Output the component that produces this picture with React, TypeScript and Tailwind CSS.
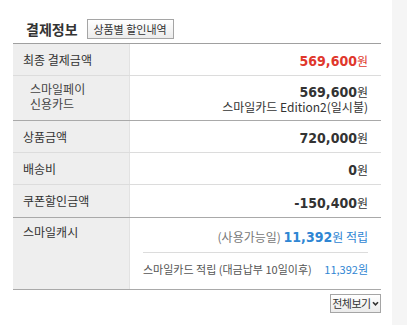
import React from "react";

const KR = "font-['Noto_Sans_CJK_KR','Noto_Sans',sans-serif]";
const NUM = "font-['DejaVu_Sans_Condensed','DejaVu_Sans','Noto_Sans_CJK_KR',sans-serif] font-bold";

function Row({
  label,
  children,
  h,
  strong,
  labelTop,
}: {
  label: React.ReactNode;
  children: React.ReactNode;
  h: string;
  strong?: boolean;
  labelTop?: boolean;
}) {
  return (
    <div className={`flex ${h} border-b ${strong ? "border-[#a9a9a9]" : "border-[#dcdcdc]"}`}>
      <div
        className={`w-[117px] shrink-0 bg-[#eeeeee] border-r border-[#e2e2e2] pl-[10px] text-[12px] text-[#333] flex ${labelTop ? "items-start" : "items-center"}`}
      >
        {label}
      </div>
      <div className="flex-1 bg-white pr-[13px] flex flex-col justify-center items-end">{children}</div>
    </div>
  );
}

export default function App() {
  return (
    <div className={`flex w-[407px] h-[330px] bg-white ${KR}`}>
      <div className="w-[392px] shrink-0 pl-[13px] pr-[11px]">
        <div className="flex items-center gap-[9px] pl-[13px] pt-[19px] pb-[4px]">
          <span className="text-[14px] font-bold text-[#333] leading-none">결제정보</span>
          <button className="h-[20px] w-[87px] border border-[#a5a5a5] bg-gradient-to-b from-white to-[#ececec] text-[11px] text-[#333] leading-none flex items-center justify-center">
            상품별 할인내역
          </button>
        </div>
        <div className="border-t border-[#a0a0a0]">
          <Row label="최종 결제금액" h="h-[32px]">
            <span className="text-[#e0372c] leading-none">
              <span className={`${NUM} text-[14px]`}>569,600</span>
              <span className="text-[12px]">원</span>
            </span>
          </Row>
          <Row
            h="h-[45px]"
            strong
            label={
              <div className="pl-[7px] pt-[5px] leading-[15px] text-[12px] text-[#444]">
                <div>스마일페이</div>
                <div>신용카드</div>
              </div>
            }
            labelTop
          >
            <div className="flex flex-col items-end pt-[1px]">
              <span className="text-[#333] leading-[15px]">
                <span className={`${NUM} text-[14px]`}>569,600</span>
                <span className="text-[12px]">원</span>
              </span>
              <span className="text-[12px] text-[#333] leading-[14px]">스마일카드 Edition2(일시불)</span>
            </div>
          </Row>
          <Row label="상품금액" h="h-[32px]">
            <span className="text-[#333] leading-none">
              <span className={`${NUM} text-[14px]`}>720,000</span>
              <span className="text-[12px]">원</span>
            </span>
          </Row>
          <Row label="배송비" h="h-[32px]">
            <span className="text-[#333] leading-none">
              <span className={`${NUM} text-[14px]`}>0</span>
              <span className="text-[12px]">원</span>
            </span>
          </Row>
          <Row label="쿠폰할인금액" h="h-[33px]" strong>
            <span className="text-[#333] leading-none">
              <span className={`${NUM} text-[14px]`}>-150,400</span>
              <span className="text-[12px]">원</span>
            </span>
          </Row>
          <div className="flex h-[72px] border-b border-[#a9a9a9]">
            <div className="w-[117px] shrink-0 bg-[#eeeeee] border-r border-[#e2e2e2] pl-[10px] pt-[7px] text-[12px] text-[#333] leading-[14px]">
              스마일캐시
            </div>
            <div className="flex-1 bg-white pl-[13px] pr-[13px] flex flex-col">
              <div className="h-[34px] flex items-center justify-end">
                <span className="leading-none">
                  <span className="text-[12px] text-[#777]">(사용가능일) </span>
                  <span className={`${NUM} text-[14px] text-[#2f86d3]`}>11,392</span>
                  <span className="text-[12px] text-[#2f86d3]">원 적립</span>
                </span>
              </div>
              <div className="border-t border-[#dcdcdc] h-[34px] flex items-center justify-between">
                <span className="text-[11px] text-[#555]">스마일카드 적립 (대금납부 10일이후)</span>
                <span className="text-[11px] text-[#2f86d3]">11,392원</span>
              </div>
            </div>
          </div>
        </div>
        <div className="flex justify-end pt-[4px]">
          <button className="h-[19px] w-[51px] border border-[#a5a5a5] bg-gradient-to-b from-white to-[#ebebeb] text-[11px] text-[#333] leading-none flex items-center justify-center gap-[1px] tracking-[-0.5px]">
            전체보기
            <svg width="7" height="5" viewBox="0 0 8 6">
              <path d="M1 1.5 L4 4.5 L7 1.5" stroke="#333" strokeWidth="2" fill="none" />
            </svg>
          </button>
        </div>
      </div>
      <div className="flex-1 h-[325px] bg-[#f5f5f5]" />
    </div>
  );
}
